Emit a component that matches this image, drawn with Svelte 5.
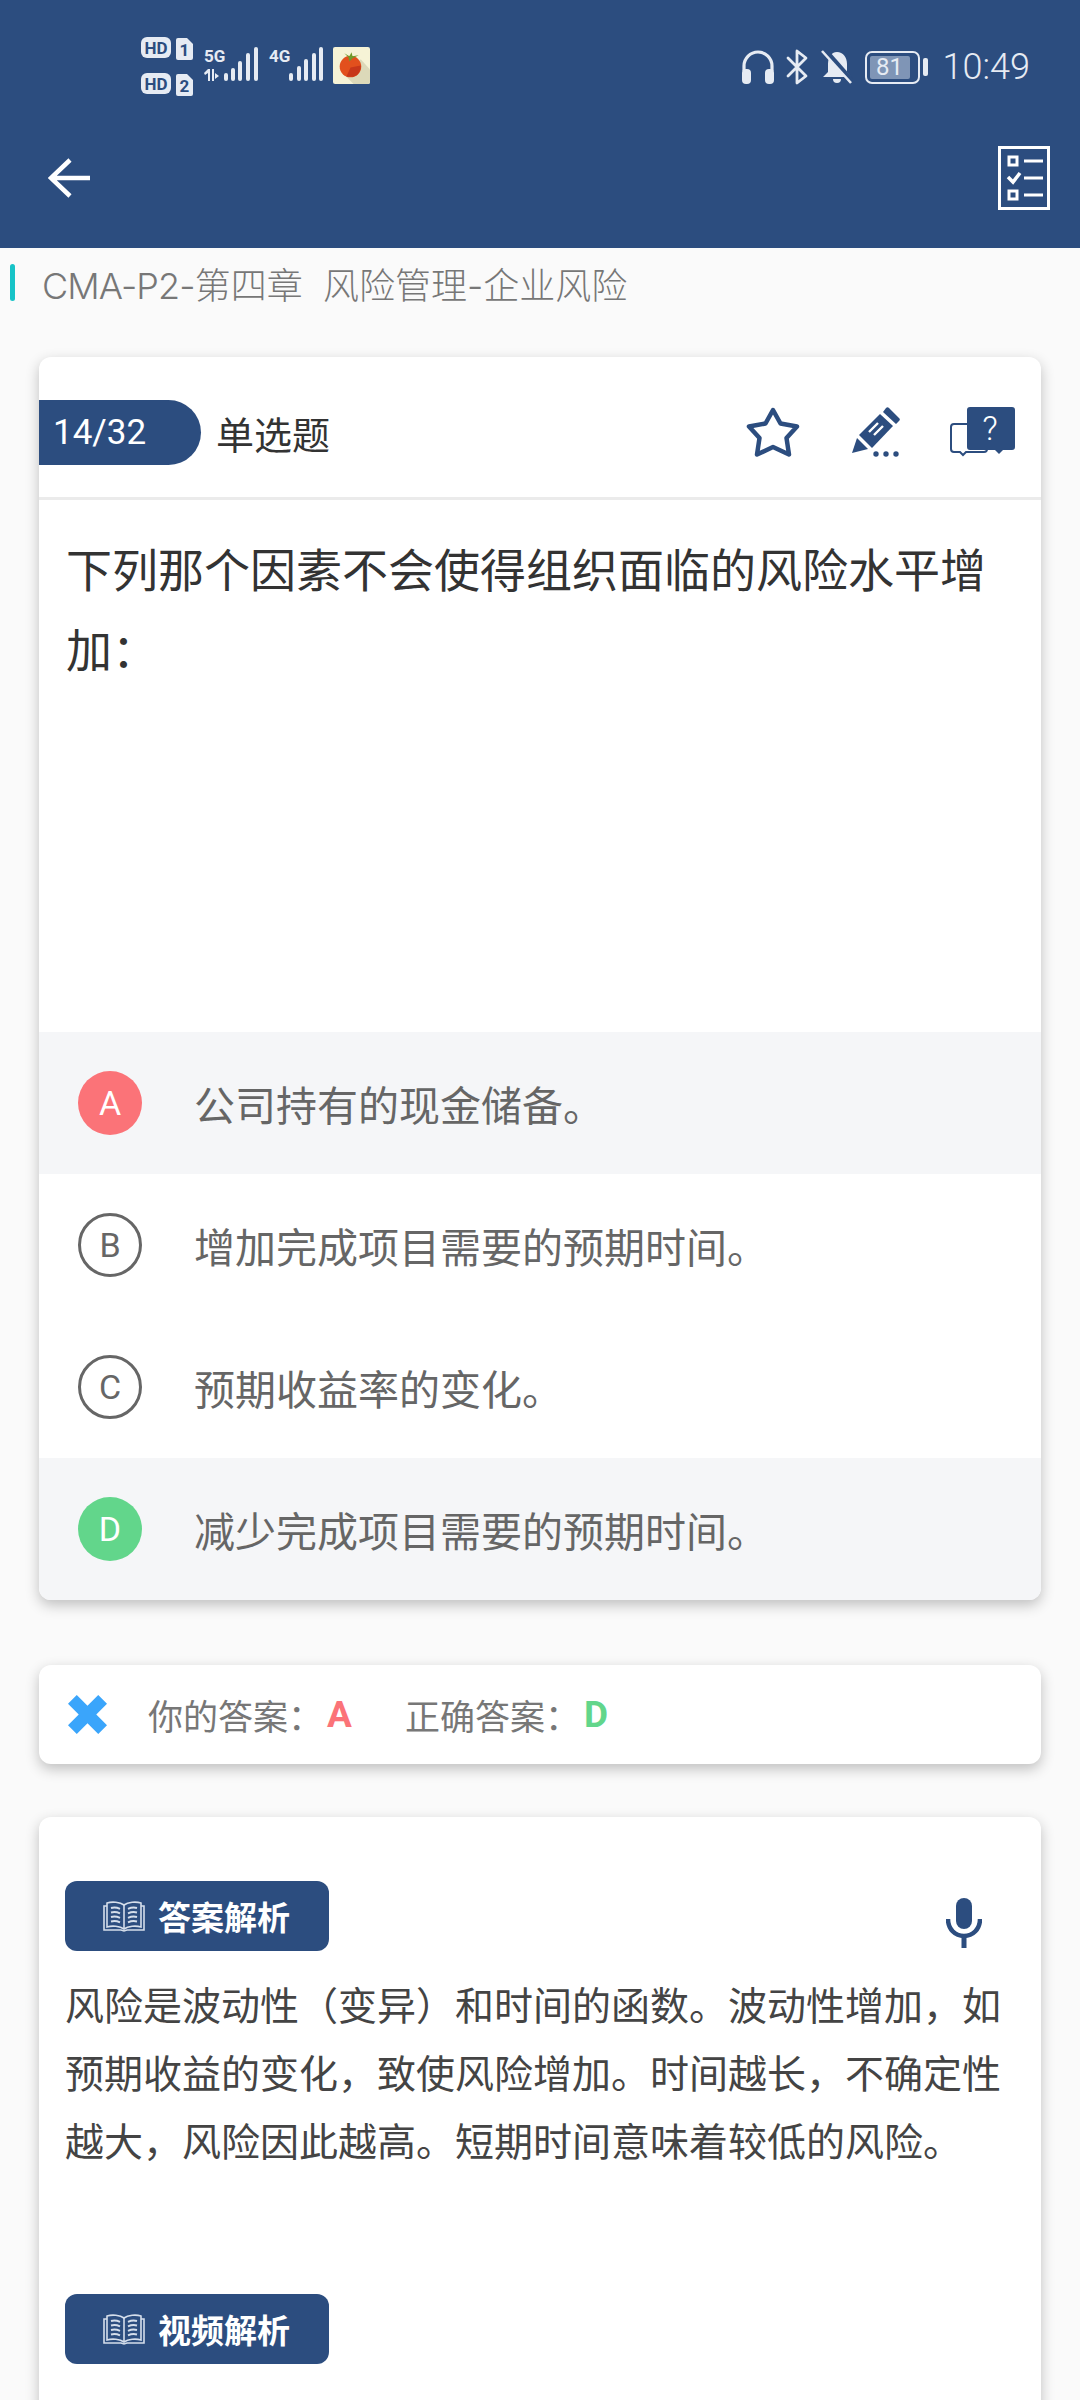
<script>
	const options = [
		{ key: 'A', text: '公司持有的现金储备。', state: 'wrong' },
		{ key: 'B', text: '增加完成项目需要的预期时间。', state: '' },
		{ key: 'C', text: '预期收益率的变化。', state: '' },
		{ key: 'D', text: '减少完成项目需要的预期时间。', state: 'right' }
	];
</script>

{#snippet book()}
	<svg class="book" viewBox="0 0 42 32" fill="none" stroke="#d5deeb" stroke-width="1.6">
		<path d="M21 5C17 2 9 1.500 4 3v24c5-1.500 13-1 17 2 4-3 12-3.500 17-2V3c-5-1.500-13-1-17 2z" />
		<path d="M21 5v24" />
		<path d="M4 6H1v24h17l3 1 3-1h17V6h-3" />
		<path d="M8 8c3-.8 6-.5 9 .8M8 12.500c3-.8 6-.5 9 .8M8 17c3-.8 6-.5 9 .8M8 21.500c3-.8 6-.5 9 .8M34 8c-3-.8-6-.5-9 .8M34 12.500c-3-.8-6-.5-9 .8M34 17c-3-.8-6-.5-9 .8M34 21.500c-3-.8-6-.5-9 .8" stroke-width="2" />
	</svg>
{/snippet}

<div class="page">
	<header class="appbar">
		<div class="status">
			<svg class="status-left" viewBox="0 0 58 74" fill="#e6ebf3">
				<rect x="1" y="7" width="30" height="21" rx="6" />
				<text x="16" y="23.500" class="hd">HD</text>
				<path d="M38 8h9l6 6v14a2 2 0 0 1-2 2H38a2 2 0 0 1-2-2V10a2 2 0 0 1 2-2z" />
				<text x="44.500" y="26" class="hd">1</text>
				<rect x="1" y="43" width="30" height="21" rx="6" />
				<text x="16" y="59.500" class="hd">HD</text>
				<path d="M38 44h9l6 6v14a2 2 0 0 1-2 2H38a2 2 0 0 1-2-2V46a2 2 0 0 1 2-2z" />
				<text x="44.500" y="62" class="hd">2</text>
			</svg>
			<svg class="signal" viewBox="0 0 60 40" fill="#e6ebf3">
				<text x="0" y="18" class="net">5G</text>
				<path d="M0 29l4-4h2v12H4v-8l-3 2zM8 25h2v12H8zM11 29l4 3-4 3z" />
				<rect x="20" y="29" width="4" height="8" rx="2" />
				<rect x="27" y="24" width="4" height="13" rx="2" />
				<rect x="34" y="17" width="4" height="20" rx="2" />
				<rect x="42" y="9" width="4" height="28" rx="2" />
				<rect x="50" y="3" width="4" height="34" rx="2" />
			</svg>
			<svg class="signal second" viewBox="0 0 56 40" fill="#e6ebf3">
				<text x="0" y="18" class="net">4G</text>
				<rect x="20" y="29" width="4" height="8" rx="2" />
				<rect x="28" y="22" width="4" height="15" rx="2" />
				<rect x="35" y="15" width="4" height="22" rx="2" />
				<rect x="43" y="9" width="4" height="28" rx="2" />
				<rect x="50" y="3" width="4" height="34" rx="2" />
			</svg>
			<svg class="tomato" viewBox="0 0 36 36">
				<rect width="36" height="36" rx="2" fill="#f6f3d6" />
				<path d="M12 28l15-16 9 10v12a2 2 0 0 1-2 2H20z" fill="#dcd9b9" />
				<circle cx="17" cy="19" r="10.500" fill="#e2501d" />
				<path d="M13 29l4-9 10-2a10.500 10.500 0 0 1-7 11z" fill="#c7371a" />
				<path d="M11 6l5 3 2-4 1 4 6-1-6 3-3 3-1-4z" fill="#6f9a2b" />
			</svg>

			<div class="status-right">
				<svg class="headphones" viewBox="0 0 32 34" fill="#e6ebf3">
					<path d="M2 21V16a14 14 0 0 1 28 0v5" fill="none" stroke="#e6ebf3" stroke-width="3.200" />
					<rect x="0" y="19" width="9" height="15" rx="4" />
					<rect x="23" y="19" width="9" height="15" rx="4" />
				</svg>
				<svg class="bluetooth" viewBox="0 0 22 36" fill="none" stroke="#e6ebf3" stroke-width="2.800" stroke-linejoin="round" stroke-linecap="round">
					<path d="M2 9l18 18-9 7V2l9 7L2 27" />
				</svg>
				<svg class="bell" viewBox="0 0 32 34" fill="#e6ebf3">
					<path d="M16 2c6 0 10 5 10 12v8l4 5H2l5-5v-8c0-6 3-12 9-12z" />
					<path d="M12 29h8a4 4 0 0 1-8 0z" />
					<path d="M3 -1l28 32" stroke="#2c4d7f" stroke-width="5" />
					<path d="M1 1l29 32" stroke="#e6ebf3" stroke-width="2.600" />
				</svg>
				<div class="battery">
					<div class="battery-body"><span>81</span></div>
					<i></i>
				</div>
				<span class="time">10:49</span>
			</div>
		</div>
		<div class="toolbar">
			<svg class="back" viewBox="0 0 42 42" fill="none" stroke="#fff" stroke-width="4.500">
				<path d="M42 21H4M22 3L3 21l19 18" />
			</svg>
			<svg class="list" viewBox="0 0 52 64" fill="none" stroke="#fff">
				<rect x="1.500" y="1.500" width="49" height="61" stroke-width="3" />
				<rect x="11" y="11" width="8" height="8" stroke-width="3" />
				<path d="M26 15h19M26 32h19M26 49h19" stroke-width="3" />
				<path d="M10 31l5 5 7-9" stroke-width="3.500" />
				<rect x="11" y="45" width="8" height="8" stroke-width="3" />
			</svg>
		</div>
	</header>

	<div class="crumb">
		<i></i>
		<span><span class="latin">CMA-P2-</span>第四章&nbsp;&nbsp;风险管理-企业风险</span>
	</div>

	<section class="card question">
		<div class="q-head">
			<div class="pill">14/32</div>
			<span class="q-type">单选题</span>
			<div class="q-tools">
				<svg class="star" viewBox="0 0 54 50" fill="none" stroke="#2c4d7f" stroke-width="4.500" stroke-linejoin="round">
					<path d="M27 3l7.500 13.500L51 19.500 40.500 31 43 47.500 27 40 11 47.500 13.500 31 3 19.500l16.500-3z" />
				</svg>
				<svg class="pencil" viewBox="0 0 48 50" fill="#2c4d7f">
					<path d="M37 1l10 10a2 2 0 0 1 0 3l-3 3L31 5l3-4a2 2 0 0 1 3 0z" />
					<path d="M28 7l13 12-21 22L7 28z" />
					<path d="M26 16L17 25M31 19L22 28" stroke="#fff" stroke-width="2.400" />
					<path d="M5 31l11 11-16 4z" />
					<circle cx="24" cy="47" r="2.700" /><circle cx="34" cy="47" r="2.700" /><circle cx="44" cy="47" r="2.700" />
				</svg>
				<svg class="ask" viewBox="0 0 66 50" fill="#2c4d7f">
					<path d="M18 17H5a3 3 0 0 0-3 3v22a3 3 0 0 0 3 3h6l3 3 3-3h18a3 3 0 0 0 3-3v-2" fill="none" stroke="#2c4d7f" stroke-width="2" />
					<path d="M21 0h42a3 3 0 0 1 3 3v37a3 3 0 0 1-3 3H54l-4 4-4-4H21a3 3 0 0 1-3-3V3a3 3 0 0 1 3-3z" />
					<text x="41" y="33" class="qmark">?</text>
				</svg>
			</div>
		</div>
		<div class="q-title">下列那个因素不会使得组织面临的风险水平增加：</div>
		<ul class="options">
			{#each options as o}
				<li class:shaded={o.state !== ''}>
					<span class="circle {o.state}">{o.key}</span>
					<span>{o.text}</span>
				</li>
			{/each}
		</ul>
	</section>

	<section class="card result">
		<svg class="cross" viewBox="0 0 40 40" fill="#3aa5fb">
			<path d="M9 0l11 11L31 0l9 9-11 11 11 11-9 9-11-11L9 40l-9-9 11-11L0 9z" />
		</svg>
		<span class="yours">你的答案：</span><b class="bad">A</b>
		<span class="correct">正确答案：</span><b class="good">D</b>
	</section>

	<section class="card analysis">
		<div class="a-head">
			<div class="tag">{@render book()}答案解析</div>
			<svg class="mic" viewBox="0 0 36 50" fill="#2c4d7f">
				<rect x="10" y="0" width="16" height="31" rx="8" />
				<path d="M2 21c0 10 7 17 16 17s16-7 16-17" fill="none" stroke="#2c4d7f" stroke-width="4.500" />
				<rect x="15.500" y="37" width="5" height="13" />
			</svg>
		</div>
		<p>风险是波动性（变异）和时间的函数。波动性增加，如预期收益的变化，致使风险增加。时间越长，不确定性越大，风险因此越高。短期时间意味着较低的风险。</p>
		<div class="tag video">{@render book()}视频解析</div>
	</section>
</div>

<style>
	:global(body) {
		margin: 0;
		background: #fafafa;
	}

	.page {
		height: 2400px;
		overflow: hidden;
		background: #fafafa;
		font-family: 'Roboto', 'Noto Sans CJK SC', sans-serif;
	}

	.appbar {
		height: 248px;
		background: #2c4d7f;
	}

	.status {
		height: 118px;
		display: flex;
		align-items: flex-start;
		padding: 30px 50px 0 140px;
		box-sizing: border-box;
	}

	.status-left {
		width: 58px;
		height: 74px;
		overflow: visible;
	}

	.hd {
		font: 700 17px 'Roboto', sans-serif;
		fill: #2c4d7f;
		text-anchor: middle;
	}

	.net {
		font: 700 17px 'Roboto', sans-serif;
		fill: #e6ebf3;
	}

	.signal {
		width: 60px;
		height: 40px;
		margin: 14px 0 0 6px;
		overflow: visible;
	}

	.signal.second {
		width: 56px;
		margin-left: 5px;
	}

	.tomato {
		width: 37px;
		height: 37px;
		margin: 17px 0 0 8px;
	}

	.status-right {
		margin-left: auto;
		display: flex;
		align-items: center;
		height: 50px;
		margin-top: 12px;
		color: #e6ebf3;
	}

	.headphones {
		width: 32px;
		height: 34px;
	}

	.bluetooth {
		width: 22px;
		height: 36px;
		margin-left: 12px;
	}

	.bell {
		width: 32px;
		height: 34px;
		margin-left: 13px;
	}

	.battery {
		display: flex;
		align-items: center;
		margin-left: 12px;
	}

	.battery-body {
		width: 55px;
		height: 33px;
		box-sizing: border-box;
		border: 2.500px solid #e6ebf3;
		border-radius: 7px;
		padding: 3px 8px 3px 3px;
		display: flex;
	}

	.battery-body span {
		flex: 1;
		background: #7f95b6;
		border-radius: 2px;
		font: 400 24px/22px 'Roboto', sans-serif;
		text-align: center;
	}

	.battery i {
		width: 5px;
		height: 18px;
		margin-left: 3px;
		border-radius: 2px;
		background: #e6ebf3;
	}

	.time {
		margin-left: 15px;
		font-size: 36px;
		font-weight: 300;
	}

	.toolbar {
		height: 130px;
		box-sizing: border-box;
		display: flex;
		align-items: center;
		justify-content: space-between;
		padding: 0 29px 10px 48px;
	}

	.back {
		width: 42px;
		height: 42px;
	}

	.list {
		width: 54px;
		height: 64px;
	}

	.crumb {
		height: 69px;
		display: flex;
		align-items: center;
		gap: 27px;
		padding-left: 10px;
		font-family: 'Inter', 'Noto Sans CJK SC', sans-serif;
		font-size: 36px;
		font-weight: 300;
		color: #777;
	}

	.latin {
		letter-spacing: -0.9px;
	}

	.crumb i {
		width: 5px;
		height: 37px;
		border-radius: 3px;
		background: #17c3c7;
	}

	.card {
		margin: 34px 39px 0;
		background: #fff;
		border-radius: 12px;
		box-shadow: 0 5px 14px rgba(0, 0, 0, 0.24);
	}

	.question {
		margin-top: 40px;
	}

	.q-head {
		height: 143px;
		display: flex;
		align-items: center;
		border-bottom: 3px solid #ebebeb;
		box-sizing: border-box;
		padding-top: 10px;
	}

	.pill {
		width: 162px;
		height: 65px;
		box-sizing: border-box;
		padding-left: 14px;
		background: #2c4d7f;
		border-radius: 0 33px 33px 0;
		color: #fff;
		font-size: 35px;
		line-height: 65px;
	}

	.q-type {
		margin-left: 15px;
		font-size: 38px;
		color: #333;
	}

	.q-tools {
		margin-left: auto;
		display: flex;
		align-items: center;
		padding-right: 26px;
	}

	.star {
		width: 54px;
		height: 50px;
	}

	.pencil {
		width: 48px;
		height: 50px;
		margin-left: 52px;
	}

	.ask {
		width: 66px;
		height: 50px;
		margin-left: 49px;
	}

	.qmark {
		font: 300 34px 'Roboto', sans-serif;
		fill: #fff;
		text-anchor: middle;
	}

	.q-title {
		height: 532px;
		box-sizing: border-box;
		padding: 31px 27px 0;
		font-size: 46px;
		line-height: 80px;
		color: #333;
	}

	.options {
		list-style: none;
		margin: 0;
		padding: 0;
	}

	.options li {
		height: 142px;
		display: flex;
		align-items: center;
		gap: 52px;
		padding-left: 39px;
		font-size: 41px;
		color: #666;
	}

	.options li:last-child {
		border-radius: 0 0 12px 12px;
	}

	.shaded {
		background: #f5f6f8;
	}

	.circle {
		width: 64px;
		height: 64px;
		flex: none;
		box-sizing: border-box;
		border: 3px solid #666;
		border-radius: 50%;
		display: flex;
		align-items: center;
		justify-content: center;
		font-size: 34px;
	}

	.circle.wrong {
		background: #fb7378;
		border: 0;
		color: #fff;
	}

	.circle.right {
		background: #62d68b;
		border: 0;
		color: #fff;
	}

	.result {
		margin-top: 65px;
		height: 99px;
		display: flex;
		align-items: center;
		padding-left: 29px;
		font-size: 35px;
		color: #777;
	}

	.cross {
		width: 39px;
		height: 39px;
		margin-right: 41px;
	}

	.result b {
		font-size: 37px;
	}

	.bad {
		color: #fb7378;
		margin-left: 4px;
	}

	.good {
		color: #62d68b;
		margin-left: 4px;
	}

	.correct {
		margin-left: 53px;
	}

	.analysis {
		margin-top: 53px;
		height: 700px;
		padding: 64px 26px 0;
	}

	.a-head {
		display: flex;
		align-items: center;
		justify-content: space-between;
		padding-right: 33px;
	}

	.tag {
		width: 264px;
		height: 70px;
		box-sizing: border-box;
		padding-left: 38px;
		display: flex;
		align-items: center;
		gap: 13px;
		background: #2c4d7f;
		border-radius: 12px;
		color: #fff;
		font-size: 33px;
		font-weight: 700;
	}

	.book {
		width: 42px;
		height: 32px;
	}

	.mic {
		width: 36px;
		height: 50px;
		margin-top: 14px;
	}

	.analysis p {
		margin: 0;
		padding-top: 22px;
		font-size: 39px;
		line-height: 68px;
		color: #444;
	}

	.video {
		margin-top: 117px;
	}
</style>
